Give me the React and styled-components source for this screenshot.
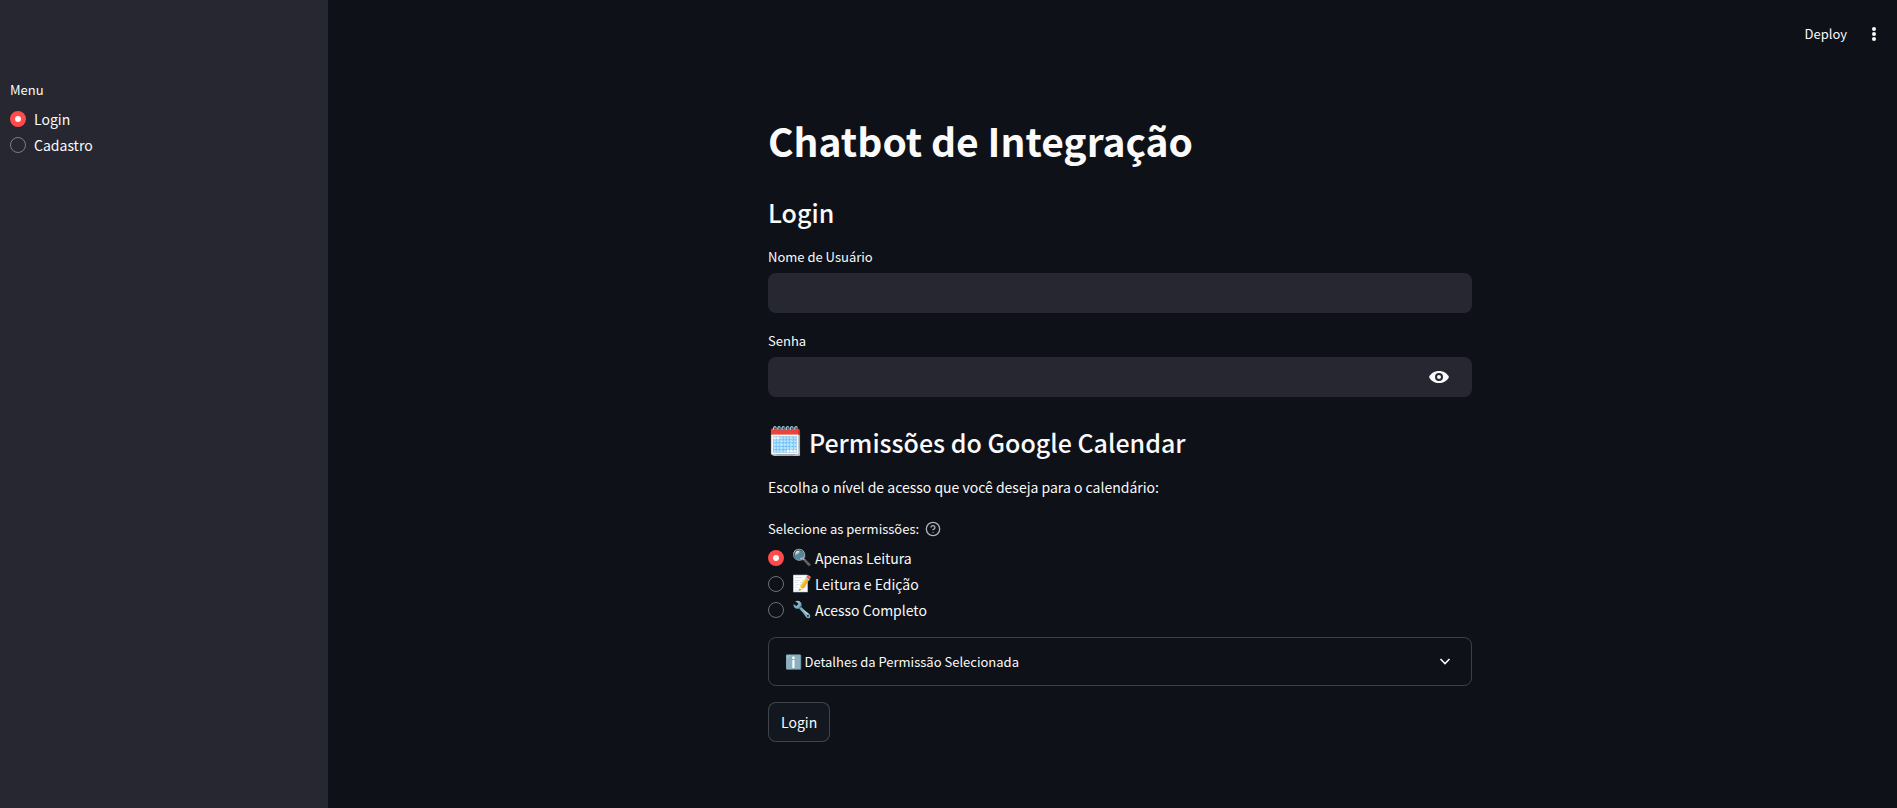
import React, { useState } from "react";
import styled, { createGlobalStyle } from "styled-components";

const GlobalStyle = createGlobalStyle`
  *, *::before, *::after { box-sizing: border-box; }
  body {
    margin: 0;
    background: #0e1117;
    color: #fafafa;
    font-family: "Noto Sans CJK JP", "Noto Sans", "Noto Color Emoji", sans-serif;
    font-size: 14px;
    line-height: 24px;
  }
  button, input { font: inherit; color: inherit; }
`;

const Page = styled.div`
  display: grid;
  grid-template-columns: 328px minmax(0, 1fr);
  min-height: 100vh;
`;

const Sidebar = styled.aside`
  background: #262730;
  padding: 78px 10px 24px;
`;

const Content = styled.div`
  display: flex;
  flex-direction: column;
`;

const Toolbar = styled.header`
  display: flex;
  justify-content: flex-end;
  align-items: center;
  gap: 18px;
  height: 68px;
  padding: 0 14px;
`;

const ToolbarButton = styled.button`
  display: flex;
  align-items: center;
  padding: 0;
  border: 0;
  background: none;
  font-size: 13px;
  cursor: pointer;
`;

const Main = styled.main`
  width: 100%;
  max-width: 736px;
  margin: 0 auto;
  padding: 46px 16px 64px;
`;

const Centered = styled.div`
  padding-left: 15px;
`;

const Title = styled.h1`
  margin: 0 0 28px;
  font-size: 39px;
  font-weight: 700;
  line-height: 53px;
`;

const Subtitle = styled.h2`
  display: flex;
  align-items: center;
  gap: 6px;
  margin: 0 0 16px;
  padding-top: ${(p) => (p.$spaced ? 12 : 0)}px;
  font-size: 25px;
  font-weight: 500;
  line-height: 34px;
`;

const Form = styled.form`
  display: flex;
  flex-direction: column;
`;

const Field = styled.div`
  display: flex;
  flex-direction: column;
  gap: 4px;
  margin-bottom: 16px;
`;

const Label = styled.label`
  font-size: 13px;
`;

const InputBox = styled.div`
  display: flex;
  align-items: center;
  height: 40px;
  border-radius: 8px;
  background: #262730;
`;

const Input = styled.input`
  flex: 1;
  min-width: 0;
  height: 100%;
  padding: 0 12px;
  border: 0;
  outline: 0;
  background: none;
`;

const RevealButton = styled.button`
  display: flex;
  margin-right: 22px;
  padding: 0;
  border: 0;
  background: none;
  cursor: pointer;
`;

const Text = styled.p`
  margin: 0 0 18px;
`;

const Group = styled.fieldset`
  margin: 0 0 14px;
  padding: 0;
  border: 0;
  min-width: 0;
`;

const Legend = styled.legend`
  display: flex;
  align-items: center;
  gap: 6px;
  margin-bottom: 4px;
  padding: 0;
  font-size: 13px;
`;

const Option = styled.label`
  display: flex;
  align-items: center;
  gap: 8px;
  height: 26px;
  cursor: pointer;
`;

const OptionText = styled.span`
  display: flex;
  align-items: center;
  gap: 3px;
`;

const Radio = styled.input`
  appearance: none;
  flex: none;
  width: 16px;
  height: 16px;
  margin: 0;
  border: 1px solid rgba(250, 250, 250, 0.4);
  border-radius: 50%;

  &:checked {
    border: 5px solid #ff4b4b;
    background: #fafafa;
  }
`;

const Details = styled.details`
  margin-bottom: 16px;
  border: 1px solid rgba(250, 250, 250, 0.2);
  border-radius: 8px;
`;

const Summary = styled.summary`
  display: flex;
  align-items: center;
  gap: 2px;
  height: 47px;
  padding: 0 20px 0 16px;
  font-size: 13px;
  list-style: none;
  cursor: pointer;

  svg:last-child { margin-left: auto; }
`;

const DetailsBody = styled.p`
  margin: 0;
  padding: 0 16px 16px;
`;

const SubmitButton = styled.button`
  align-self: flex-start;
  height: 40px;
  padding: 0 12px;
  border: 1px solid rgba(250, 250, 250, 0.2);
  border-radius: 8px;
  background: #13171f;
  cursor: pointer;
`;

const Emoji = styled.span`
  font-family: "Noto Color Emoji", sans-serif;
  font-size: ${(p) => p.$size}px;
`;

const permissions = [
  { icon: "🔍", name: "Apenas Leitura", text: "Visualizar eventos do calendário." },
  { icon: "📝", name: "Leitura e Edição", text: "Visualizar e editar eventos do calendário." },
  { icon: "🔧", name: "Acesso Completo", text: "Controle total do calendário." },
];

export default function App() {
  const [page, setPage] = useState("Login");
  const [permission, setPermission] = useState(0);
  const [visible, setVisible] = useState(false);

  return (
    <Page>
      <GlobalStyle />
      <Sidebar>
        <Group>
          <Legend>Menu</Legend>
          {["Login", "Cadastro"].map((name) => (
            <Option key={name}>
              <Radio type="radio" name="menu" checked={page === name} onChange={() => setPage(name)} />
              {name}
            </Option>
          ))}
        </Group>
      </Sidebar>
      <Content>
        <Toolbar>
          <ToolbarButton type="button">Deploy</ToolbarButton>
          <ToolbarButton type="button" aria-label="Opções">
            <svg width="18" height="18" viewBox="0 0 18 18" fill="#fafafa">
              <circle cx="9" cy="4" r="2" />
              <circle cx="9" cy="9" r="2" />
              <circle cx="9" cy="14" r="2" />
            </svg>
          </ToolbarButton>
        </Toolbar>
        <Centered>
          <Main>
            <Title>Chatbot de Integração</Title>
            <Form onSubmit={(e) => e.preventDefault()}>
              <Subtitle>Login</Subtitle>
              <Field>
                <Label htmlFor="user">Nome de Usuário</Label>
                <InputBox>
                  <Input id="user" type="text" autoComplete="username" />
                </InputBox>
              </Field>
              <Field>
                <Label htmlFor="password">Senha</Label>
                <InputBox>
                  <Input id="password" type={visible ? "text" : "password"} autoComplete="current-password" />
                  <RevealButton type="button" aria-label="Mostrar senha" onClick={() => setVisible(!visible)}>
                    <svg width="22" height="16" viewBox="0 0 22 16">
                      <path d="M1 8C3 4 6.800 2 11 2S19 4 21 8C19 12 15.200 14 11 14S3 12 1 8Z" fill="#fafafa" />
                      <circle cx="11" cy="8" r="3" fill="#fafafa" stroke="#262730" strokeWidth="2" />
                    </svg>
                  </RevealButton>
                </InputBox>
              </Field>
              <Subtitle $spaced>
                <Emoji $size={28}>🗓️</Emoji>
                Permissões do Google Calendar
              </Subtitle>
              <Text>Escolha o nível de acesso que você deseja para o calendário:</Text>
              <Group>
                <Legend>
                  Selecione as permissões:
                  <svg width="16" height="16" viewBox="0 0 24 24" fill="none" stroke="#b0b1b4" strokeWidth="2" strokeLinecap="round" strokeLinejoin="round">
                    <circle cx="12" cy="12" r="10" />
                    <path d="M9.090 9a3 3 0 0 1 5.830 1c0 2-3 3-3 3" />
                    <path d="M12 17h.01" />
                  </svg>
                </Legend>
                {permissions.map((item, index) => (
                  <Option key={item.name}>
                    <Radio type="radio" name="permission" checked={permission === index} onChange={() => setPermission(index)} />
                    <OptionText>
                      <Emoji $size={16}>{item.icon}</Emoji>
                      {item.name}
                    </OptionText>
                  </Option>
                ))}
              </Group>
              <Details>
                <Summary>
                  <Emoji $size={14}>ℹ️</Emoji>
                  Detalhes da Permissão Selecionada
                  <svg width="12" height="12" viewBox="0 0 12 12" fill="none" stroke="#fafafa" strokeWidth="1.6">
                    <path d="M1.500 3L6 7.500L10.500 3" />
                  </svg>
                </Summary>
                <DetailsBody>{permissions[permission].text}</DetailsBody>
              </Details>
              <SubmitButton type="submit">Login</SubmitButton>
            </Form>
          </Main>
        </Centered>
      </Content>
    </Page>
  );
}
